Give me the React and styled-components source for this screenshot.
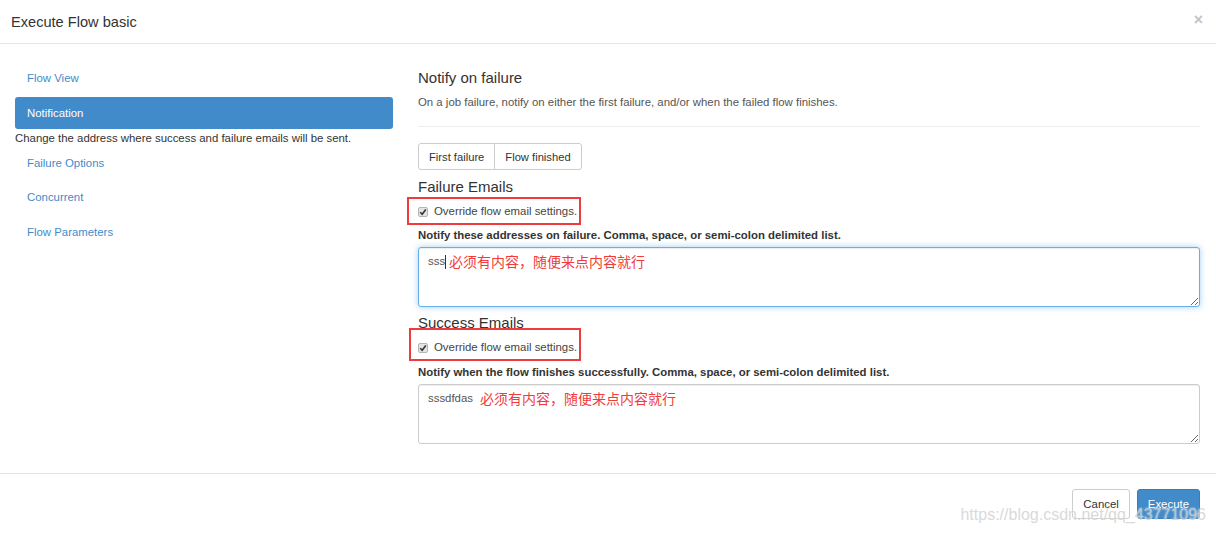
import React from "react";
import styled, { createGlobalStyle } from "styled-components";

const GlobalStyle = createGlobalStyle`
  html, body {
    margin: 0;
    padding: 0;
    background: #fff;
  }
  body {
    font-family: "Liberation Sans", Arial, "Noto Sans CJK SC", sans-serif;
    font-size: 11.4px;
    color: #333;
  }
  * { box-sizing: border-box; }
`;

const Modal = styled.div`
  position: relative;
  width: 1216px;
  height: 533px;
  overflow: hidden;
  background: #fff;
`;

const Header = styled.div`
  height: 44px;
  display: flex;
  align-items: center;
  justify-content: space-between;
  padding: 0 13px 0 11px;
  border-bottom: 1px solid #e5e5e5;
`;

const Title = styled.h4`
  margin: 0;
  font-size: 14.6px;
  font-weight: 400;
  color: #333;
`;

const Close = styled.span`
  font-size: 16px;
  font-weight: 700;
  color: #c4c4c4;
  line-height: 1;
  margin-top: -4px;
`;

const Body = styled.div`
  display: grid;
  grid-template-columns: 378px 1fr;
  column-gap: 25px;
  padding: 18px 16px 29px 15px;
`;

const Nav = styled.div`
  display: flex;
  flex-direction: column;
  gap: 2px;
`;

const NavItem = styled.a`
  display: flex;
  align-items: center;
  height: 32px;
  padding: 0 12px;
  border-radius: 3px;
  font-size: 11.4px;
  text-decoration: none;
  color: ${(p) => (p.$active ? "#fff" : "#428bca")};
  background: ${(p) => (p.$active ? "#428bca" : "transparent")};
  & + & {
    margin-top: 0.5px;
  }
`;

const NavHelp = styled.p`
  margin: -1px 0 -1px;
  line-height: 16px;
  font-size: 11.4px;
  color: #333;
`;

const Pane = styled.div`
  display: flex;
  flex-direction: column;
  padding-top: 6px;
`;

const Heading = styled.h4`
  margin: ${(p) => p.$mt || 0}px 0 0;
  font-size: 15px;
  line-height: 20px;
  font-weight: 400;
  color: #333;
`;

const Lead = styled.p`
  margin: 6px 0 0;
  line-height: 17px;
  font-size: 11.4px;
  color: #555;
`;

const Rule = styled.hr`
  margin: 15px 0 0;
  border: 0;
  border-top: 1px solid #eee;
`;

const BtnGroup = styled.div`
  display: flex;
  align-self: flex-start;
  margin-top: 16px;
`;

const GroupBtn = styled.button`
  height: 27px;
  padding: 0 10px;
  font-family: inherit;
  font-size: 11.2px;
  color: #333;
  background: #fff;
  border: 1px solid #ccc;
  margin-left: -1px;
  border-radius: 0;
  &:first-child {
    margin-left: 0;
    border-radius: 3px 0 0 3px;
  }
  &:last-child {
    border-radius: 0 3px 3px 0;
  }
`;

const CheckRow = styled.div`
  display: flex;
  margin-top: ${(p) => p.$mt}px;
`;

const Highlight = styled.label`
  display: inline-flex;
  align-items: center;
  gap: 6px;
  border: 2px solid #ee3b3b;
  padding: ${(p) => p.$pad};
  margin: ${(p) => p.$margin};
  line-height: 17px;
  font-size: 11.4px;
  color: #444;
`;

const Box = styled.span`
  width: 10px;
  height: 10px;
  border-radius: 2px;
  border: 1px solid #b5b5b5;
  background: #e4e4e4;
  display: inline-flex;
  align-items: center;
  justify-content: center;
`;

const FieldLabel = styled.div`
  margin-top: ${(p) => p.$mt}px;
  line-height: 17px;
  font-size: 11.4px;
  font-weight: 700;
  color: #333;
`;

const Field = styled.div`
  position: relative;
  margin-top: 3px;
`;

const Area = styled.textarea`
  display: block;
  width: 100%;
  height: 60px;
  resize: vertical;
  padding: 5px 9px;
  font-family: inherit;
  font-size: 11.4px;
  line-height: 17px;
  color: #555;
  border-radius: 3px;
  border: 1px solid ${(p) => (p.$focus ? "#66afe9" : "#ccc")};
  box-shadow: ${(p) =>
    p.$focus
      ? "inset 0 1px 1px rgba(0,0,0,.075), 0 0 6px rgba(102,175,233,.6)"
      : "inset 0 1px 1px rgba(0,0,0,.075)"};
  outline: none;
`;

const Note = styled.span`
  position: absolute;
  top: 5px;
  left: ${(p) => p.$left}px;
  display: flex;
  align-items: center;
  gap: 3px;
  font-family: "Noto Sans CJK SC", sans-serif;
  font-size: 14px;
  line-height: 19px;
  color: #f23a3a;
`;

const Caret = styled.i`
  width: 1px;
  height: 14px;
  background: #333;
`;

const Footer = styled.div`
  display: flex;
  justify-content: flex-end;
  gap: 7px;
  padding: 15px 16px 0;
  border-top: 1px solid #e5e5e5;
`;

const Button = styled.button`
  height: 30px;
  padding: 0 10px;
  font-family: inherit;
  font-size: 11.4px;
  border-radius: 3px;
  color: ${(p) => (p.$primary ? "#fff" : "#333")};
  background: ${(p) => (p.$primary ? "#428bca" : "#fff")};
  border: 1px solid ${(p) => (p.$primary ? "#357ebd" : "#ccc")};
`;

const Watermark = styled.span`
  position: absolute;
  right: 10px;
  bottom: 9px;
  font-size: 16px;
  color: rgba(200, 200, 200, 0.7);
  text-shadow: 0 0 2px rgba(255, 255, 255, 0.8);
  pointer-events: none;
`;

const Check = () => (
  <svg width="8" height="8" viewBox="0 0 8 8">
    <path d="M1.2 4.2 L3.2 6.2 L6.8 1.6" fill="none" stroke="#333" strokeWidth="1.6" />
  </svg>
);

const navItems = ["Flow View", "Notification", "Failure Options", "Concurrent", "Flow Parameters"];

const App = () => {
  return (
    <Modal>
      <GlobalStyle />
      <Header>
        <Title>Execute Flow basic</Title>
        <Close>×</Close>
      </Header>
      <Body>
        <Nav>
          {navItems.map((item) => (
            <React.Fragment key={item}>
              <NavItem $active={item === "Notification"}>{item}</NavItem>
              {item === "Notification" && (
                <NavHelp>Change the address where success and failure emails will be sent.</NavHelp>
              )}
            </React.Fragment>
          ))}
        </Nav>

        <Pane>
          <Heading>Notify on failure</Heading>
          <Lead>On a job failure, notify on either the first failure, and/or when the failed flow finishes.</Lead>
          <Rule />
          <BtnGroup>
            <GroupBtn>First failure</GroupBtn>
            <GroupBtn>Flow finished</GroupBtn>
          </BtnGroup>

          <Heading $mt={7}>Failure Emails</Heading>
          <CheckRow $mt={6}>
            <Highlight $pad="4px 2px 3px 9px" $margin="-6px 0 -5px -11px">
              <Box><Check /></Box>
              Override flow email settings.
            </Highlight>
          </CheckRow>
          <FieldLabel $mt={7}>Notify these addresses on failure. Comma, space, or semi-colon delimited list.</FieldLabel>
          <Field>
            <Area $focus readOnly value="sss" />
            <Note $left={27}>
              <Caret />
              必须有内容，随便来点内容就行
            </Note>
          </Field>

          <Heading $mt={6}>Success Emails</Heading>
          <CheckRow $mt={6}>
            <Highlight $pad="9px 2px 3px 7px" $margin="-11px 0 -5px -9px">
              <Box><Check /></Box>
              Override flow email settings.
            </Highlight>
          </CheckRow>
          <FieldLabel $mt={8}>Notify when the flow finishes successfully. Comma, space, or semi-colon delimited list.</FieldLabel>
          <Field>
            <Area readOnly value="sssdfdas" />
            <Note $left={62}>必须有内容，随便来点内容就行</Note>
          </Field>
        </Pane>
      </Body>
      <Footer>
        <Button>Cancel</Button>
        <Button $primary>Execute</Button>
      </Footer>
      <Watermark>https://blog.csdn.net/qq_43771096</Watermark>
    </Modal>
  );
};

export default App;
